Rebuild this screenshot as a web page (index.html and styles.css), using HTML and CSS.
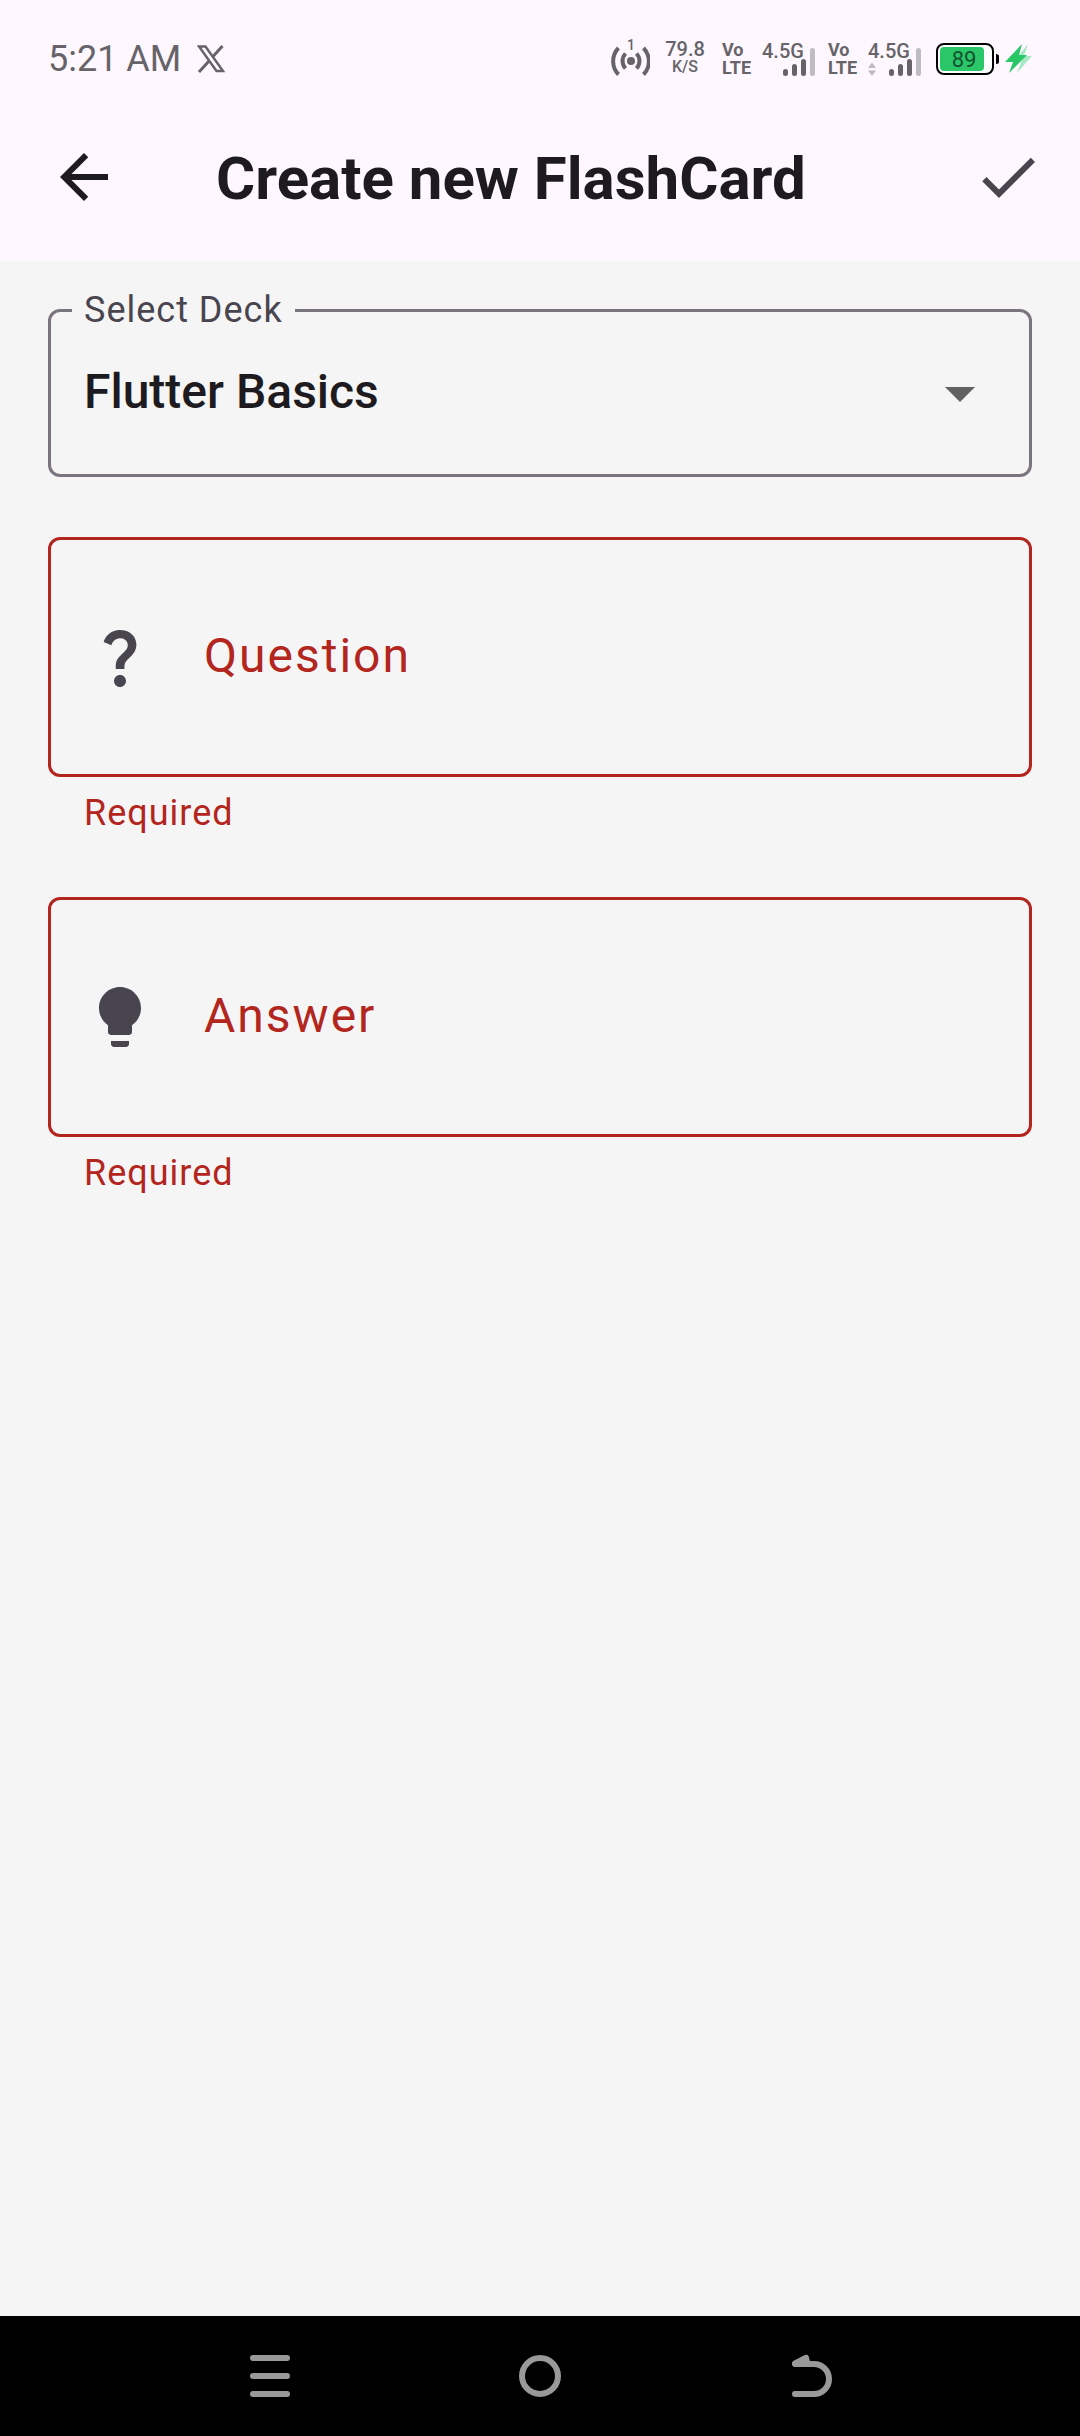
FILE: index.html
```html
<!DOCTYPE html>
<html lang="en">
<head>
<meta charset="utf-8">
<meta name="viewport" content="width=device-width, initial-scale=1">
<title>Create new FlashCard</title>
<link rel="stylesheet" href="styles.css">
</head>
<body>
<div class="status-bar">
  <div class="status-left">
    <span class="clock">5:21 AM</span>
    <svg class="x-logo" viewBox="0 0 28 28" aria-label="X">
      <path d="M2 1.500H8.500L26 26H19.500Z" fill="none" stroke="#666468" stroke-width="2.500"/>
      <path d="M25.500 1L15.500 12M12 16L2 27" fill="none" stroke="#666468" stroke-width="3"/>
    </svg>
  </div>
  <div class="status-right">
    <svg class="hotspot" viewBox="0 -5 42 50" aria-label="Hotspot, 1 device">
      <circle cx="23" cy="22" r="4" fill="#666468"/>
      <g fill="none" stroke="#666468" stroke-width="4">
        <path d="M17.500 14.500a11 11 0 0 0 0 15M28.500 14.500a11 11 0 0 1 0 15"/>
        <path d="M10.500 9a19 19 0 0 0 0 26.500M35.500 9a19 19 0 0 1 0 26.500"/>
      </g>
      <text x="23" y="11" class="hotspot-count">1</text>
    </svg>
    <div class="speed"><span class="speed-value">79.8</span><span class="speed-unit">K/S</span></div>
    <div class="volte"><span>Vo</span><span>LTE</span></div>
    <svg class="signal" viewBox="0 -5 55 47" aria-label="Signal">
      <text x="1" y="18" class="signal-type">4.5G</text>
      <g stroke-width="5" stroke-linecap="round" fill="none">
        <path d="M24.500 31.500v2M33.500 26.500v7M42.500 21.500v12" stroke="#666468"/>
        <path d="M51.500 10.500v23" stroke="#bfbbc2"/>
      </g>
    </svg>
    <div class="volte"><span>Vo</span><span>LTE</span></div>
    <svg class="signal" viewBox="0 -5 55 47" aria-label="Signal">
      <text x="1" y="18" class="signal-type">4.5G</text>
      <g stroke-width="5" stroke-linecap="round" fill="none">
        <path d="M24.500 31.500v2M33.500 26.500v7M42.500 21.500v12" stroke="#666468"/>
        <path d="M51.500 10.500v23" stroke="#bfbbc2"/>
      </g>
      <path d="M1 28l4-5.500 4 5.500zM1 30.500l4 5.500 4-5.500z" fill="#bfbbc2"/>
    </svg>
    <svg class="power" viewBox="0 0 96 34" aria-label="Battery 89%, charging">
      <rect x="1" y="2" width="56" height="30" rx="7" fill="#fff" stroke="#000" stroke-width="2"/>
      <path d="M60 12c2 0 3 1 3 2v6c0 1-1 2-3 2z" fill="#000"/>
      <rect x="4" y="5" width="44" height="24" rx="4" fill="#2ac769"/>
      <text x="28" y="25" class="battery-level">89</text>
      <path d="M92 2L79 18h7l-5 13 15-17h-8z" fill="#a9e8c4"/>
      <path d="M86 2L69 20h8l-4 11 18-18h-8z" fill="#2ac769"/>
    </svg>
  </div>
</div>

<header class="app-bar">
  <button class="icon-button" type="button" aria-label="Back">
    <svg class="icon" viewBox="0 0 24 24"><path fill="#1d1b20" d="M20 11H7.830l5.590-5.590L12 4l-8 8 8 8 1.410-1.410L7.830 13H20v-2z"/></svg>
  </button>
  <h1 class="title">Create new FlashCard</h1>
  <button class="icon-button" type="submit" form="card-form" aria-label="Save">
    <svg class="icon" viewBox="0 0 24 24"><path fill="#49454f" d="M9 16.170L4.830 12l-1.420 1.410L9 19 21 7l-1.410-1.410z"/></svg>
  </button>
</header>

<main class="content">
  <form id="card-form" class="card-form">
    <fieldset class="deck">
      <legend class="deck-legend"><label for="deck">Select Deck</label></legend>
      <div class="deck-control">
        <select id="deck" class="deck-select"><option>Flutter Basics</option></select>
        <svg class="icon deck-arrow" viewBox="0 0 24 24" aria-hidden="true"><path fill="#616161" d="M7 10l5 5 5-5z"/></svg>
      </div>
    </fieldset>

    <div class="field">
      <div class="field-box">
        <svg class="icon" viewBox="0 0 24 24" aria-hidden="true"><path fill="#49454f" d="M11.070 12.850c.77-1.390 2.250-2.210 3.110-3.440.91-1.290.4-3.700-2.180-3.700-1.690 0-2.520 1.280-2.870 2.340L6.540 6.960C7.250 4.830 9.180 3 11.990 3c2.350 0 3.960 1.070 4.780 2.410.7 1.150 1.110 3.300.03 4.900-1.200 1.770-2.350 2.310-2.970 3.450-.25.46-.35.76-.35 2.240h-2.890c-.01-.78-.13-2.050.48-3.150zM14 20c0 1.100-.9 2-2 2s-2-.9-2-2 .9-2 2-2 2 .9 2 2z"/></svg>
        <div class="field-control">
          <textarea id="question" class="field-input" aria-invalid="true" aria-describedby="question-error"></textarea>
          <label class="field-label" for="question">Question</label>
        </div>
      </div>
      <p class="field-error" id="question-error">Required</p>
    </div>

    <div class="field">
      <div class="field-box">
        <svg class="icon" viewBox="0 0 24 24" aria-hidden="true"><path fill="#49454f" d="M9 21c0 .55.45 1 1 1h4c.55 0 1-.45 1-1v-1H9v1zm3-19C8.140 2 5 5.140 5 9c0 2.380 1.190 4.470 3 5.740V17c0 .55.45 1 1 1h6c.55 0 1-.45 1-1v-2.260c1.810-1.270 3-3.360 3-5.740 0-3.860-3.140-7-7-7z"/></svg>
        <div class="field-control">
          <textarea id="answer" class="field-input" aria-invalid="true" aria-describedby="answer-error"></textarea>
          <label class="field-label" for="answer">Answer</label>
        </div>
      </div>
      <p class="field-error" id="answer-error">Required</p>
    </div>
  </form>
</main>

<nav class="nav-bar" aria-label="System">
  <button class="nav-button" type="button" aria-label="Recent apps">
    <svg class="nav-icon" viewBox="0 0 48 48"><path d="M7 6h34M7 24h34M7 42h34"/></svg>
  </button>
  <button class="nav-button" type="button" aria-label="Home">
    <svg class="nav-icon" viewBox="0 0 48 48"><circle cx="24" cy="24" r="18"/></svg>
  </button>
  <button class="nav-button" type="button" aria-label="Back">
    <svg class="nav-icon" viewBox="0 0 48 48"><path d="M20 6L9 12H28a15 15 0 0 1 0 30H9"/><path d="M9 11.500l11-5.500 1 4z"/></svg>
  </button>
</nav>
</body>
</html>
```
FILE: styles.css
```css
* {
  box-sizing: border-box;
}

body {
  margin: 0;
  min-height: 100vh;
  display: flex;
  flex-direction: column;
  background: #f5f5f5;
  color: #1d1b20;
  font-family: Roboto, "Liberation Sans", sans-serif;
}

button {
  padding: 0;
  border: 0;
  background: none;
}

svg {
  display: block;
  flex: none;
}

.icon {
  width: 72px;
  height: 72px;
}

/* Status bar */
.status-bar {
  display: flex;
  justify-content: space-between;
  align-items: center;
  height: 93px;
  padding: 24px 48px 0;
  background: #fef7ff;
  color: #666468;
}

.status-left,
.status-right {
  display: flex;
  align-items: center;
}

.status-left {
  gap: 16px;
}

.status-right {
  gap: 10px;
}

.clock {
  font-size: 36px;
  line-height: 48px;
}

.x-logo {
  width: 28px;
  height: 28px;
}

.hotspot {
  width: 42px;
  height: 50px;
}

.hotspot-count {
  font-size: 14px;
  font-weight: 500;
  text-anchor: middle;
  fill: #666468;
}

.speed {
  display: flex;
  flex-direction: column;
  align-items: center;
  width: 50px;
  padding-bottom: 2px;
  font-weight: 500;
  line-height: 18px;
}

.speed-value {
  font-size: 20px;
}

.speed-unit {
  font-size: 16px;
}

.volte {
  display: flex;
  flex-direction: column;
  width: 31px;
  padding-left: 2px;
  font-size: 18px;
  font-weight: 700;
  line-height: 18px;
}

.signal {
  width: 55px;
  height: 47px;
}

.signal-type {
  font-size: 20px;
  font-weight: 500;
  fill: #666468;
}

.power {
  width: 96px;
  height: 34px;
  margin-left: 4px;
}

.battery-level {
  font-size: 22px;
  text-anchor: middle;
  fill: #14532f;
}

/* App bar */
.app-bar {
  display: flex;
  align-items: center;
  height: 168px;
  padding: 0 36px 0 48px;
  background: #fef7ff;
}

.title {
  flex: 1;
  margin: 0 0 0 96px;
  padding-top: 4px;
  font-size: 60px;
  font-weight: 700;
  line-height: 76px;
}

/* Form */
.content {
  flex: 1;
  padding: 24px 48px;
}

.card-form {
  display: flex;
  flex-direction: column;
  gap: 60px;
}

.deck {
  min-width: 0;
  margin: 0;
  padding: 0 0 23px;
  border: 3px solid #79747e;
  border-radius: 12px;
}

.deck-legend {
  margin-left: 21px;
  padding: 0 12px;
  color: #49454f;
  font-size: 36px;
  line-height: 50px;
  letter-spacing: 1px;
}

.deck-control {
  display: grid;
  align-items: center;
}

.deck-select,
.deck-arrow {
  grid-area: 1 / 1;
}

.deck-select {
  width: 100%;
  height: 116px;
  padding: 0 108px 4px 33px;
  border: 0;
  appearance: none;
  background: none;
  color: #1d1b20;
  font: 500 48px Roboto, "Liberation Sans", sans-serif;
}

.deck-arrow {
  justify-self: end;
  margin-right: 33px;
  pointer-events: none;
}

.field-box {
  display: flex;
  align-items: center;
  min-height: 240px;
  padding: 0 33px;
  gap: 48px;
  border: 3px solid #b3261e;
  border-radius: 12px;
}

.field-control {
  flex: 1;
  display: grid;
  align-items: center;
}

.field-input,
.field-label {
  grid-area: 1 / 1;
  font: 400 48px/72px Roboto, "Liberation Sans", sans-serif;
  letter-spacing: 2px;
}

.field-input {
  width: 100%;
  height: 72px;
  padding: 0;
  border: 0;
  outline: 0;
  resize: none;
  background: none;
  color: #1d1b20;
}

.field-label {
  padding-bottom: 2px;
  color: #b3261e;
  pointer-events: none;
}

.field-error {
  margin: 12px 36px 0;
  color: #b3261e;
  font-size: 36px;
  line-height: 48px;
  letter-spacing: 1px;
}

/* System navigation */
.nav-bar {
  display: grid;
  grid-template-columns: repeat(3, 1fr);
  height: 120px;
  padding: 0 12.5%;
  background: #000;
}

.nav-button {
  display: flex;
  align-items: center;
  justify-content: center;
}

.nav-icon {
  width: 48px;
  height: 48px;
  fill: none;
  stroke: #999;
  stroke-width: 6;
  stroke-linecap: round;
  stroke-linejoin: round;
}
```
